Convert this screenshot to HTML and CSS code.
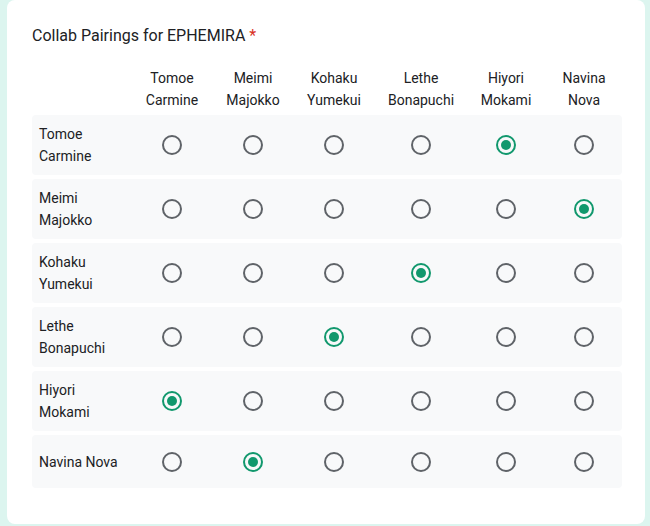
FILE: index.html
```html
<!DOCTYPE html>
<html>
<head>
<meta charset="utf-8">
<link rel="stylesheet" href="styles.css">
</head>
<body>
<div class="card">
  <div class="title">Collab Pairings for EPHEMIRA <span class="req">*</span></div>
  <div class="grid">
    <div class="row head">
      <div class="label"></div>
      <div class="col">Tomoe<br>Carmine</div>
      <div class="col">Meimi<br>Majokko</div>
      <div class="col">Kohaku<br>Yumekui</div>
      <div class="col">Lethe<br>Bonapuchi</div>
      <div class="col">Hiyori<br>Mokami</div>
      <div class="col">Navina<br>Nova</div>
    </div>
    <div class="row item">
      <div class="label">Tomoe<br>Carmine</div>
      <div class="cell"><span class="radio"></span></div>
      <div class="cell"><span class="radio"></span></div>
      <div class="cell"><span class="radio"></span></div>
      <div class="cell"><span class="radio"></span></div>
      <div class="cell"><span class="radio on"></span></div>
      <div class="cell"><span class="radio"></span></div>
    </div>
    <div class="row item">
      <div class="label">Meimi<br>Majokko</div>
      <div class="cell"><span class="radio"></span></div>
      <div class="cell"><span class="radio"></span></div>
      <div class="cell"><span class="radio"></span></div>
      <div class="cell"><span class="radio"></span></div>
      <div class="cell"><span class="radio"></span></div>
      <div class="cell"><span class="radio on"></span></div>
    </div>
    <div class="row item">
      <div class="label">Kohaku<br>Yumekui</div>
      <div class="cell"><span class="radio"></span></div>
      <div class="cell"><span class="radio"></span></div>
      <div class="cell"><span class="radio"></span></div>
      <div class="cell"><span class="radio on"></span></div>
      <div class="cell"><span class="radio"></span></div>
      <div class="cell"><span class="radio"></span></div>
    </div>
    <div class="row item">
      <div class="label">Lethe<br>Bonapuchi</div>
      <div class="cell"><span class="radio"></span></div>
      <div class="cell"><span class="radio"></span></div>
      <div class="cell"><span class="radio on"></span></div>
      <div class="cell"><span class="radio"></span></div>
      <div class="cell"><span class="radio"></span></div>
      <div class="cell"><span class="radio"></span></div>
    </div>
    <div class="row item">
      <div class="label">Hiyori<br>Mokami</div>
      <div class="cell"><span class="radio on"></span></div>
      <div class="cell"><span class="radio"></span></div>
      <div class="cell"><span class="radio"></span></div>
      <div class="cell"><span class="radio"></span></div>
      <div class="cell"><span class="radio"></span></div>
      <div class="cell"><span class="radio"></span></div>
    </div>
    <div class="row item">
      <div class="label">Navina Nova</div>
      <div class="cell"><span class="radio"></span></div>
      <div class="cell"><span class="radio on"></span></div>
      <div class="cell"><span class="radio"></span></div>
      <div class="cell"><span class="radio"></span></div>
      <div class="cell"><span class="radio"></span></div>
      <div class="cell"><span class="radio"></span></div>
    </div>
  </div>
</div>
</body>
</html>
```
FILE: styles.css
```css
html, body {
  margin: 0;
  padding: 0;
  background: #dcf5ef;
  font-family: Roboto, "Liberation Sans", Arial, sans-serif;
  color: #202124;
}
.card {
  margin-left: 7px;
  width: 638px;
  height: 524px;
  box-sizing: border-box;
  background: #ffffff;
  border-radius: 8px;
  padding: 24px 23px 0 25px;
}
.title {
  font-size: 16px;
  line-height: 24px;
}
.req {
  color: #d93025;
}
.grid {
  margin-top: 19px;
  display: flex;
  flex-direction: column;
  gap: 4px;
  width: 590px;
}
.row {
  display: grid;
  grid-template-columns: 98px 84px 78px 84px 90px 80px 76px;
  align-items: center;
}
.head {
  font-size: 14px;
  line-height: 22px;
}
.head .col {
  text-align: center;
}
.item {
  background: #f8f9fa;
  border-radius: 4px;
  min-height: 53px;
  padding: 8px 0;
  box-sizing: border-box;
  font-size: 14px;
  line-height: 22px;
}
.item .label {
  padding-left: 7px;
}
.cell {
  display: flex;
  justify-content: center;
  align-items: center;
}
.radio {
  width: 20px;
  height: 20px;
  box-sizing: border-box;
  border: 2px solid #5f6368;
  border-radius: 50%;
  display: flex;
  align-items: center;
  justify-content: center;
}
.radio.on {
  border-color: #11986d;
}
.radio.on::after {
  content: "";
  width: 10px;
  height: 10px;
  border-radius: 50%;
  background: #11986d;
}
```
